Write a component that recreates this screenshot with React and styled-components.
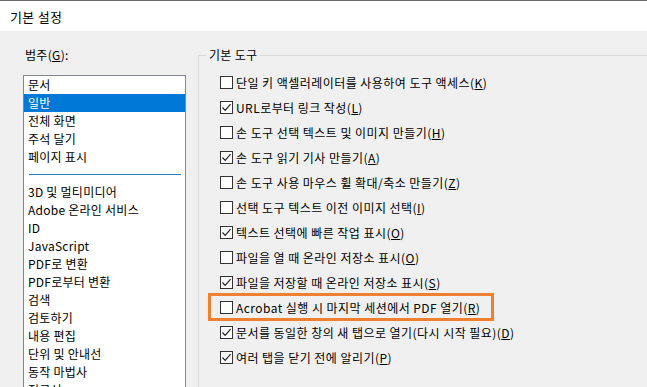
import React from 'react';
import styled, {createGlobalStyle} from 'styled-components';

const GlobalStyle = createGlobalStyle`
    body {
        margin: 0;
        overflow: hidden;
        font-family: "Segoe UI", "Noto Sans CJK KR", "Noto Sans", sans-serif;
        font-size: 12px;
        color: #000;
    }
`;

const categories = [
    "문서",
    "일반",
    "전체 화면",
    "주석 달기",
    "페이지 표시",
    "-",
    "3D 및 멀티미디어",
    "Adobe 온라인 서비스",
    "ID",
    "JavaScript",
    "PDF로 변환",
    "PDF로부터 변환",
    "검색",
    "검토하기",
    "내용 편집",
    "단위 및 안내선",
    "동작 마법사",
    "접근성"
];

const options = [
    {id: 1, text: "단일 키 액셀러레이터를 사용하여 도구 액세스", key: "K", checked: false},
    {id: 2, text: "URL로부터 링크 작성", key: "L", checked: true},
    {id: 3, text: "손 도구 선택 텍스트 및 이미지 만들기", key: "H", checked: false},
    {id: 4, text: "손 도구 읽기 기사 만들기", key: "A", checked: true},
    {id: 5, text: "손 도구 사용 마우스 휠 확대/축소 만들기", key: "Z", checked: false},
    {id: 6, text: "선택 도구 텍스트 이전 이미지 선택", key: "I", checked: false},
    {id: 7, text: "텍스트 선택에 빠른 작업 표시", key: "O", checked: true},
    {id: 8, text: "파일을 열 때 온라인 저장소 표시", key: "O", checked: false},
    {id: 9, text: "파일을 저장할 때 온라인 저장소 표시", key: "S", checked: true},
    {id: 10, text: "Acrobat 실행 시 마지막 세션에서 PDF 열기", key: "R", checked: false, highlight: true},
    {id: 11, text: "문서를 동일한 창의 새 탭으로 열기(다시 시작 필요)", key: "D", checked: true},
    {id: 12, text: "여러 탭을 닫기 전에 알리기", key: "P", checked: true}
];

const Window = styled.div`
    width: 647px;
    height: 387px;
    display: flex;
    flex-direction: column;
    border-top: 1px solid #6b6b6b;
    box-sizing: border-box;
    overflow: hidden;
`;

const TitleBar = styled.div`
    height: 30px;
    flex-shrink: 0;
    background: #fff;
    display: flex;
    align-items: center;
    padding-left: 10px;
    font-size: 13px;
    letter-spacing: 0.3px;
`;

const Body = styled.div`
    flex: 1;
    display: flex;
    background: #f0f0f0;
    overflow: hidden;
`;

const LeftPane = styled.div`
    width: 198px;
    flex-shrink: 0;
    padding: 16px 0 0 23px;
    box-sizing: border-box;
`;

const PaneLabel = styled.div`
    line-height: 16px;
    padding-left: 2px;
    letter-spacing: 0.3px;
`;

const ListBox = styled.div`
    margin-top: 12px;
    width: 163px;
    background: #fff;
    border: 1px solid #828790;
    box-sizing: border-box;
`;

const ListItem = styled.div`
    height: 18px;
    line-height: 18px;
    padding-left: 4px;
    white-space: nowrap;
    letter-spacing: 0.25px;
    background: ${props => props.selected ? "#0078d7" : "transparent"};
    color: ${props => props.selected ? "#fff" : "#000"};
`;

const Separator = styled.div`
    height: 17px;
    display: flex;
    align-items: center;
    padding: 0 4px 0 5px;

    &::after {
        content: "";
        flex: 1;
        height: 1px;
        background: #2b79b5;
    }
`;

const GroupBox = styled.div`
    flex: 1;
    margin-top: 24px;
    border-top: 1px solid #d9d9d9;
    border-left: 1px solid #d9d9d9;
    padding-left: 9px;
`;

const Legend = styled.div`
    margin: -9px 0 0 -2px;
    width: fit-content;
    padding: 0 3px;
    line-height: 16px;
    letter-spacing: 0.3px;
    background: #f0f0f0;
`;

const OptionList = styled.div`
    margin-top: 7px;
    display: flex;
    flex-direction: column;
`;

const Row = styled.div`
    height: ${props => props.highlight ? "28px" : "25px"};
    margin: ${props => props.highlight ? "-2px 0 -1px" : "0"};
    width: ${props => props.highlight ? "fit-content" : "auto"};
    display: flex;
    align-items: center;
    gap: 3px;
    padding: ${props => props.highlight ? "0 11px 0 9px" : "0 0 0 12px"};
    border: ${props => props.highlight ? "3px solid #ef8032" : "none"};
    box-sizing: border-box;
    white-space: nowrap;
    letter-spacing: 0.45px;
`;

const Box = styled.span`
    width: 13px;
    height: 13px;
    flex-shrink: 0;
    border: 1px solid #333;
    background: #fff;
    box-sizing: border-box;
    display: flex;
    align-items: center;
    justify-content: center;
`;

function CheckBox({checked}){
    return (
        <Box>
            {checked && (
                <svg width="11" height="11" viewBox="0 0 11 11">
                    <path d="M1.5 5.5 L4.2 8.3 L9.6 2.2" fill="none" stroke="#222" strokeWidth="1.2" />
                </svg>
            )}
        </Box>
    );
}

export default function App(){
    return (
        <Window>
            <GlobalStyle />
            <TitleBar>기본 설정</TitleBar>
            <Body>
                <LeftPane>
                    <PaneLabel>범주(<u>G</u>):</PaneLabel>
                    <ListBox>
                        {categories.map((c, i) =>
                            c === "-"
                                ? <Separator key={i} />
                                : <ListItem key={i} selected={c === "일반"}>{c}</ListItem>
                        )}
                    </ListBox>
                </LeftPane>
                <GroupBox>
                    <Legend>기본 도구</Legend>
                    <OptionList>
                        {options.map(o => (
                            <Row key={o.id} highlight={o.highlight}>
                                <CheckBox checked={o.checked} />
                                <span>{o.text}(<u>{o.key}</u>)</span>
                            </Row>
                        ))}
                    </OptionList>
                </GroupBox>
            </Body>
        </Window>
    );
}
